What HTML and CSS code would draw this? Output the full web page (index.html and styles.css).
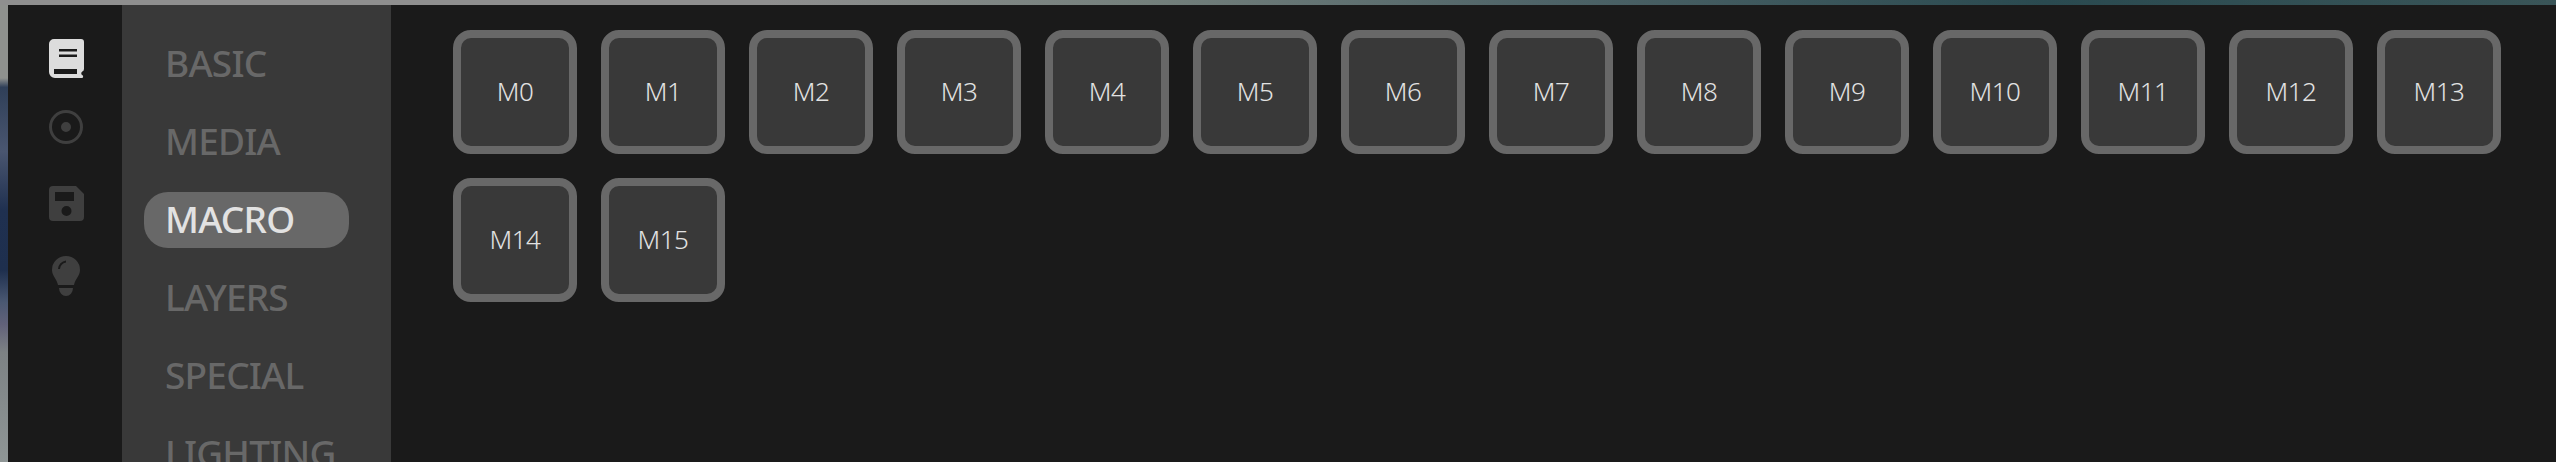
FILE: index.html
```html
<!DOCTYPE html>
<html lang="en">
<head>
  <meta charset="UTF-8" />
  <title>Macro keys</title>
  <link rel="stylesheet" href="styles.css">
</head>
<body>
  <div class="top-strip"></div>
  <div class="window">
    <div class="edge-strip"></div>
    <nav class="icon-rail">
      <svg class="rail-icon book active" viewBox="0 0 35 39">
        <path fill-rule="evenodd" d="M5 0H32a3 3 0 0 1 3 3V30a3 3 0 0 1-2 2.800c-1 1-1 2.400 0 3.200a1.500 1.500 0 0 1-1 3H6a6 6 0 0 1-6-6V5a5 5 0 0 1 5-5ZM10 10v2.500H28V10ZM10 15.500v2.500H28V15.500ZM5 30v5H28V30Z"/>
      </svg>
      <svg class="rail-icon disc" viewBox="0 0 34 34">
        <path fill-rule="evenodd" d="M17 0a17 17 0 1 0 0 34a17 17 0 1 0 0-34ZM17 3a14 14 0 1 1 0 28a14 14 0 1 1 0-28ZM17 12a5 5 0 1 0 0 10a5 5 0 1 0 0-10Z"/>
      </svg>
      <svg class="rail-icon save" viewBox="0 0 35 35">
        <path fill-rule="evenodd" d="M4 0H27L35 8V31a4 4 0 0 1-4 4H4a4 4 0 0 1-4-4V4a4 4 0 0 1 4-4ZM6 6V15H25V6ZM17.500 20a5 5 0 1 0 0 10a5 5 0 1 0 0-10Z"/>
      </svg>
      <svg class="rail-icon bulb" viewBox="0 0 28 40">
        <path fill-rule="evenodd" d="M14 0a14 14 0 0 1 14 14c0 6-5 9-6 15H6C5 23 0 20 0 14A14 14 0 0 1 14 0ZM14 4.500a9 9 0 0 0-8 8.500h2a7.500 7.500 0 0 1 6-6.500ZM7 32H21a7 8 0 0 1-14 0Z"/>
      </svg>
    </nav>
    <nav class="menu">
      <a class="menu-item">BASIC</a>
      <a class="menu-item">MEDIA</a>
      <a class="menu-item selected">MACRO</a>
      <a class="menu-item">LAYERS</a>
      <a class="menu-item">SPECIAL</a>
      <a class="menu-item">LIGHTING</a>
    </nav>
    <main class="keys">
      <button class="key">M0</button>
      <button class="key">M1</button>
      <button class="key">M2</button>
      <button class="key">M3</button>
      <button class="key">M4</button>
      <button class="key">M5</button>
      <button class="key">M6</button>
      <button class="key">M7</button>
      <button class="key">M8</button>
      <button class="key">M9</button>
      <button class="key">M10</button>
      <button class="key">M11</button>
      <button class="key">M12</button>
      <button class="key">M13</button>
      <button class="key">M14</button>
      <button class="key">M15</button>
    </main>
  </div>
</body>
</html>
```

FILE: styles.css
```css
html, body {
  margin: 0;
  padding: 0;
  height: 100%;
  background: #1a1a1a;
  font-family: 'Noto Sans', 'Open Sans', sans-serif;
  overflow: hidden;
}

body {
  display: flex;
  flex-direction: column;
}

.top-strip {
  height: 5px;
  flex: none;
  background: linear-gradient(90deg, #8f8f8f 0%, #8f8f8f 30%, #74807c 45%, #4f6468 60%, #2a4a50 80%, #3a5558 100%);
}

.window {
  display: flex;
  flex: 1;
  min-height: 0;
}

.edge-strip {
  width: 8px;
  flex: none;
  background: linear-gradient(180deg, #8f918e 0%, #8f918e 16%, #2f3f58 18%, #4a5670 32%, #1f3050 45%, #1e2f4e 58%, #4a5872 65%, #62627a 70%, #7d8284 76%, #8f9696 100%);
}

/* Icon column */
.icon-rail {
  width: 114px;
  flex: none;
  display: flex;
  flex-direction: column;
  align-items: center;
  box-sizing: border-box;
  padding: 34px 0 0 2px;
  background: #1a1a1a;
}
.rail-icon {
  flex: none;
  fill: #3f3f3f;
}
.rail-icon.active {
  fill: #dcdcdc;
}
.book {
  width: 35px;
  height: 39px;
}
.disc {
  width: 34px;
  height: 34px;
  margin-top: 32px;
}
.save {
  width: 35px;
  height: 35px;
  margin-top: 42px;
}
.bulb {
  width: 28px;
  height: 40px;
  margin-top: 35px;
}

/* Category menu */
.menu {
  width: 269px;
  flex: none;
  display: flex;
  flex-direction: column;
  gap: 22px;
  box-sizing: border-box;
  padding: 31px 42px 0 22px;
  background: #393939;
  overflow: hidden;
}
.menu-item {
  flex: none;
  height: 56px;
  line-height: 53px;
  padding-left: 21px;
  border-radius: 24px;
  font-size: 37px;
  font-weight: 500;
  letter-spacing: -0.8px;
  color: #686868;
  white-space: nowrap;
}
.menu-item.selected {
  background: #686868;
  color: #e2e2e2;
}

/* Key grid */
.keys {
  flex: 1;
  display: flex;
  flex-wrap: wrap;
  align-content: flex-start;
  gap: 24px;
  box-sizing: border-box;
  padding: 25px 40px 0 62px;
}
.key {
  width: 124px;
  height: 124px;
  box-sizing: border-box;
  padding: 0 0 2px;
  border: 8px solid #686868;
  border-radius: 18px;
  background: #393939;
  color: #e2e2e2;
  font-family: inherit;
  font-size: 26px;
  font-weight: 300;
  letter-spacing: -0.4px;
}
```
